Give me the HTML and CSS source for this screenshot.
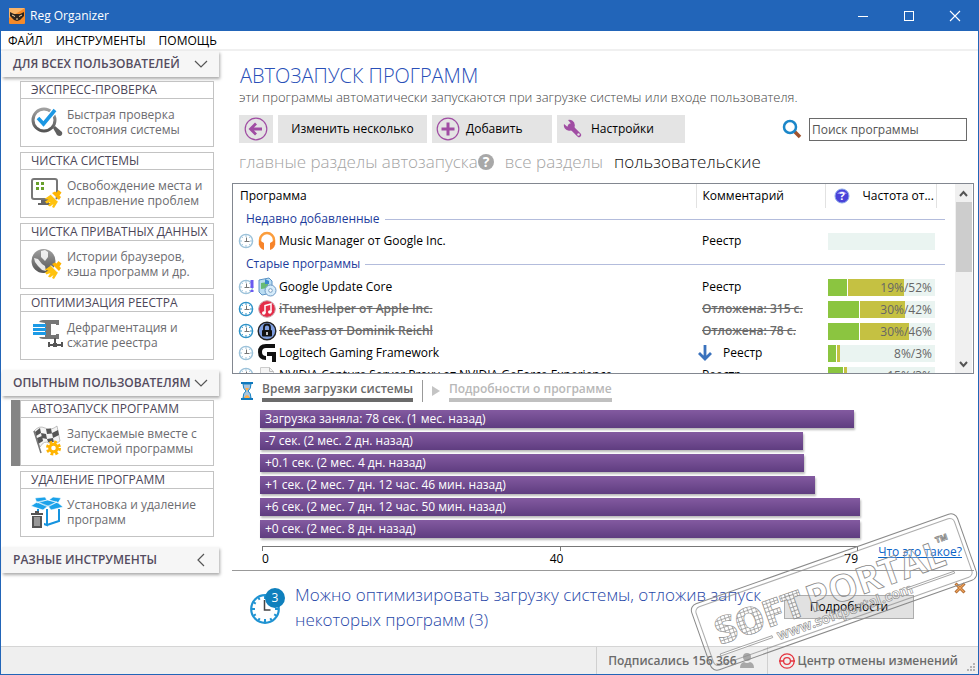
FILE: index.html
```html
<!DOCTYPE html>
<html lang="ru">
<head>
<meta charset="utf-8">
<title>Reg Organizer</title>
<link rel="stylesheet" href="styles.css">
</head>
<body>
<svg class="defs" aria-hidden="true">
  <defs>
    <symbol id="clock" viewBox="0 0 16 16"><circle cx="8" cy="8" r="6.600" fill="#fff" stroke="currentColor" stroke-width="1.400"/><path d="M8 2v2M8 12v2M2 8h2M12 8h2M3.800 3.800l1 1M12.200 3.800l-1 1M3.800 12.200l1-1M12.200 12.200l-1-1" stroke="currentColor"/><path d="M8.500 4.500v4M6.500 8.500h5" fill="none" stroke="#777"/></symbol>
    <symbol id="broom" viewBox="0 0 20 20"><path d="M15.500 1l3 2.500-2 3 1.500 1.500-2 3-7-7 3-1.500 1.500 1z" fill="#ffb400"/><path d="M8 5.500l7 7-4 6.500-2-1 1.500-3-3.500 2.500-2-1 2.500-3.500-4 1.500-1.500-2 3.500-2-4-.5z" fill="#ffc20e"/><path d="M8 5.500l7 7" stroke="#fff" stroke-width="1"/></symbol>
    <linearGradient id="gray" x1="0" y1="0" x2="0" y2="1"><stop offset="0" stop-color="#a0a0a0"/><stop offset="1" stop-color="#555"/></linearGradient>
    <pattern id="cells" width="4" height="4" patternUnits="userSpaceOnUse"><rect width="4" height="4" fill="#fff"/><path d="M0 0h4M0 0v4" stroke="#666" stroke-width="1.400"/></pattern>
  </defs>
</svg>

<div class="window">
  <header class="titlebar">
    <svg class="app-icon" viewBox="0 0 16 16" aria-hidden="true"><rect width="16" height="16" rx="1" fill="#f58a2a"/><path d="M0 0h16L0 10z" fill="#f9b469"/><path d="M1 4l4 2h6l4-2v4l-4 4-3 1-3-1-4-4z" fill="#2d2420"/><path d="M3 7l3 1.500M13 7l-3 1.500M7 11h2" stroke="#ffd9a0"/></svg>
    <span class="title">Reg Organizer</span>
    <div class="window-buttons">
      <button type="button" aria-label="Свернуть"><svg width="12" height="12"><path d="M1 6.500h10" stroke="#fff"/></svg></button>
      <button type="button" aria-label="Развернуть"><svg width="12" height="12"><rect x="1.500" y="1.500" width="9" height="9" fill="none" stroke="#fff"/></svg></button>
      <button type="button" aria-label="Закрыть"><svg width="12" height="12"><path d="M1 1l10 10M11 1L1 11" stroke="#fff" stroke-width="1.100"/></svg></button>
    </div>
  </header>
  <nav class="menu"><a href="#">ФАЙЛ</a><a href="#">ИНСТРУМЕНТЫ</a><a href="#">ПОМОЩЬ</a></nav>

  <div class="body">
    <aside class="sidebar">
      <button type="button" class="section">ДЛЯ ВСЕХ ПОЛЬЗОВАТЕЛЕЙ<svg width="14" height="14"><path d="M1 4l6 6 6-6" fill="none" stroke="#555" stroke-width="1.200"/></svg></button>
      <div class="cards">
        <a href="#" class="card"><span class="card-title">ЭКСПРЕСС-ПРОВЕРКА</span><span class="card-body">
          <svg viewBox="0 0 32 32"><path d="M22 22l2-2 7 6q1 3-2 4-2 0-3-1z" fill="#606060"/><circle cx="13" cy="14" r="11" fill="#fff" stroke="url(#gray)" stroke-width="3"/><path d="M7 12l5.500 6L24 4" fill="none" stroke="#fff" stroke-width="6"/><path d="M7 12l5.500 6L24 4" fill="none" stroke="#1c97e3" stroke-width="3.600"/></svg>
          <span>Быстрая проверка<br>состояния системы</span></span></a>
        <a href="#" class="card"><span class="card-title">ЧИСТКА СИСТЕМЫ</span><span class="card-body">
          <svg viewBox="0 0 32 32"><rect x="1" y="2" width="25" height="20" rx="2" fill="#fff" stroke="#777" stroke-width="2"/><path d="M10 23h8v3h-8zM7 26h13v2H7z" fill="#666"/><path d="M5 5h3v3H5zM10 5h3v3h-3zM5 10h3v3H5zM10 10h3v3h-3z" fill="#68a02c"/><use href="#broom" x="12" y="12" width="20" height="20"/></svg>
          <span>Освобождение места и<br>исправление проблем</span></span></a>
        <a href="#" class="card"><span class="card-title">ЧИСТКА ПРИВАТНЫХ ДАННЫХ</span><span class="card-body">
          <svg viewBox="0 0 32 32"><circle cx="12.500" cy="13" r="12" fill="url(#gray)"/><path d="M10 3l4-1 3 2v5l-3 4-4-4zM3 10l4 1 4 5 3 2 1 5-4-1-4-4-3-4z" fill="#fff" opacity=".85"/><use href="#broom" x="12" y="12" width="20" height="20"/></svg>
          <span>Истории браузеров,<br>кэша программ и др.</span></span></a>
        <a href="#" class="card"><span class="card-title">ОПТИМИЗАЦИЯ РЕЕСТРА</span><span class="card-body">
          <svg viewBox="0 0 32 32"><path d="M8 3q1-2 4-2h16v5h-3V5h-5v11h5v-1h3v5H12q-3 0-4-2h6V4z" fill="#777"/><path d="M2 5h13v3H2zM2 9h13v3H2zM2 13h13v3H2z" fill="#1c9ae6"/><path d="M23 19h2v7h-2zM17 25h15v2H17zM17 23h2v5h-2zM30 23h2v5h-2zM22 24h4v4h-4z" fill="#555"/></svg>
          <span>Дефрагментация и<br>сжатие реестра</span></span></a>
      </div>
      <button type="button" class="section">ОПЫТНЫМ ПОЛЬЗОВАТЕЛЯМ<svg width="14" height="14"><path d="M1 4l6 6 6-6" fill="none" stroke="#555" stroke-width="1.200"/></svg></button>
      <div class="cards">
        <a href="#" class="card current"><span class="card-title">АВТОЗАПУСК ПРОГРАММ</span><span class="card-body">
          <svg viewBox="0 0 32 32"><path d="M3 6q5-6 11-3t12-2l3 15q-6 5-11 2t-9 4z" fill="#f4f4f4" stroke="#999" stroke-width=".6"/><path d="M4 7l5-4 1 5-5 3zM15 4l5-.5 1 5-5 .5zM10 8l5 1 1 5-5-1zM21 8l6-3 1 5-6 3zM6 13l5-2 1 5-5 3zM16 14l6-1 1 5-6-1z" fill="#555"/><path d="M3 6l7 22" stroke="#777" stroke-width="1.500"/><circle cx="22.500" cy="23" r="6" fill="#fff" stroke="#ffb400" stroke-width="3" stroke-dasharray="2.700 2"/><circle cx="22.500" cy="23" r="3.800" fill="#fff" stroke="#ffb400" stroke-width="3"/></svg>
          <span>Запускаемые вместе с<br>системой программы</span></span></a>
        <a href="#" class="card"><span class="card-title">УДАЛЕНИЕ ПРОГРАММ</span><span class="card-body">
          <svg viewBox="0 0 32 32"><path d="M6 6l10-2 10 2-9 5zM4 2l10-1 2 3-10 3zM18 4l4-3 8 1-3 5zM0 10l6-4 11 4-5 4zM17 10l9-4 6 5-12 3z" fill="#1ba2ea" stroke="#fff" stroke-width=".6"/><path d="M7 13v13l9 3V13M16 29l12-4V13" fill="none" stroke="#1593df" stroke-width="2"/><path d="M0 15h13v17H0z" fill="#fff"/><path d="M0 17h12v2H0zM4 15h4v2H4zM1 20h10v12H1z" fill="#555"/><path d="M4 21v9M6 21v9M8 21v9" stroke="#fff" stroke-width=".8"/></svg>
          <span>Установка и удаление<br>программ</span></span></a>
      </div>
      <button type="button" class="section">РАЗНЫЕ ИНСТРУМЕНТЫ<svg width="14" height="14"><path d="M10 1L4 7l6 6" fill="none" stroke="#555" stroke-width="1.200"/></svg></button>
    </aside>

    <main class="main">
      <h1>АВТОЗАПУСК ПРОГРАММ</h1>
      <p class="subtitle">эти программы автоматически запускаются при загрузке системы или входе пользователя.</p>

      <div class="toolbar">
        <button type="button" class="tool back" aria-label="Назад"><svg width="24" height="24"><circle cx="12" cy="12" r="10.800" fill="none" stroke="#a04da3" stroke-width="1.200"/><path d="M18 12H7M12 6.500L6.500 12l5.500 5.500" fill="none" stroke="#a04da3" stroke-width="2.800"/></svg></button>
        <button type="button" class="tool several">Изменить несколько</button>
        <button type="button" class="tool add"><svg width="24" height="24"><circle cx="12" cy="12" r="10.800" fill="none" stroke="#a04da3" stroke-width="1.200"/><path d="M12 5.500v13M5.500 12h13" stroke="#a04da3" stroke-width="3"/></svg>Добавить</button>
        <button type="button" class="tool settings"><svg width="20" height="20"><path d="M7 7l9 9" stroke="#a04da3" stroke-width="4.500" stroke-linecap="round"/><path d="M5 1a5.500 5.500 0 1 1-4 4l3 2.500 3-.5.500-3z" fill="#a04da3"/><circle cx="15.500" cy="15.500" r="1.200" fill="#e4e4e4"/></svg>Настройки</button>
        <div class="search">
          <label for="q" aria-label="Поиск"><svg width="20" height="20"><path d="M12 12l6 6" stroke="#a0522d" stroke-width="3.500"/><circle cx="8" cy="8" r="6" fill="#fff" stroke="#1b87c9" stroke-width="2.500"/></svg></label>
          <input id="q" type="text" placeholder="Поиск программы">
        </div>
      </div>

      <nav class="filters">
        <a href="#">главные разделы автозапуска<svg width="16" height="16"><circle cx="8" cy="8" r="8" fill="#a8a8a8"/><text x="8" y="13" text-anchor="middle" class="help-mark">?</text></svg></a>
        <a href="#">все разделы</a>
        <a href="#" class="on">пользовательские</a>
      </nav>

      <section class="list">
        <div class="list-view">
        <table>
          <colgroup><col><col class="c-comment"><col class="c-freq"><col class="c-end"></colgroup>
          <thead><tr><th>Программа</th><th>Комментарий</th><th><span class="freq-head"><svg width="16" height="16"><circle cx="8" cy="8" r="7" fill="#4a42d8" stroke="#8aa8ea"/><path d="M3 6a5.500 4.500 0 0 1 10 0z" fill="#8f8cf5"/><text x="8" y="12" text-anchor="middle" class="help-mark small">?</text></svg>Частота от...</span></th><th></th></tr></thead>
          <tbody>
            <tr class="group"><td colspan="4"><span>Недавно добавленные</span></td></tr>
            <tr><td><span class="prog"><svg class="clk dim"><use href="#clock"/></svg>
              <svg width="20" height="20" viewBox="0 0 20 20"><path d="M3 14V9a7 7 0 0 1 14 0v5" fill="none" stroke="#fb9d3c" stroke-width="2.500"/><path d="M2 9l5 3v7q-5-2-5-6zM18 9l-5 3v7q5-2 5-6z" fill="#f7842a"/></svg>Music Manager от Google Inc.</span></td><td>Реестр</td><td><span class="freq"></span></td><td></td></tr>
            <tr class="group"><td colspan="4"><span>Старые программы</span></td></tr>
            <tr><td><span class="prog"><svg class="clk dim"><use href="#clock"/><path d="M12.500 1h3v8h-3zM12.500 11h3v2h-3z" fill="#6a5af0"/></svg>
              <svg width="20" height="20" viewBox="0 0 20 20"><path d="M2 3l10-2 3 3v12l-10 2-3-3z" fill="#b9dcf2" stroke="#5c93c4"/><path d="M4 6l7-1v6l-7 1z" fill="#69bb74"/><path d="M8 2l4 2v3H8z" fill="#3d88d0"/><circle cx="13.500" cy="13.500" r="5.500" fill="#d6ecfa" stroke="#6e99c5"/><circle cx="13.500" cy="13.500" r="1.800" fill="#fff" stroke="#7a9dc0"/></svg>Google Update Core</span></td><td>Реестр</td><td><span class="freq"><i class="g" style="width:19%"></i><i class="o" style="width:52%"></i><b>19%/52%</b></span></td><td></td></tr>
            <tr class="off"><td><span class="prog"><svg class="clk"><use href="#clock"/></svg>
              <svg width="20" height="20" viewBox="0 0 20 20"><circle cx="10" cy="10" r="8.300" fill="#e52c48" stroke="#c8a0a8"/><path d="M8 14V6.500l6-1.500v8" fill="none" stroke="#fff" stroke-width="1.500"/><circle cx="6.800" cy="14" r="1.800" fill="#fff"/><circle cx="12.800" cy="13" r="1.800" fill="#fff"/></svg><s>iTunesHelper от Apple Inc.</s></span></td><td><s>Отложена: 315 с.</s></td><td><span class="freq"><i class="g" style="width:30%"></i><i class="o" style="width:42%"></i><b>30%/42%</b></span></td><td></td></tr>
            <tr class="off"><td><span class="prog"><svg class="clk"><use href="#clock"/></svg>
              <svg width="20" height="20" viewBox="0 0 20 20"><circle cx="10" cy="10" r="8.800" fill="#7f9fe0" stroke="#222" stroke-width="1.400"/><rect x="5" y="9" width="10" height="6.500" rx="1" fill="#111"/><path d="M7 9V6.500a3 3 0 0 1 6 0V9" fill="none" stroke="#111" stroke-width="1.800"/><path d="M10 11v3" stroke="#fff" stroke-width="1.500"/></svg><s>KeePass от Dominik Reichl</s></span></td><td><s>Отложена: 78 с.</s></td><td><span class="freq"><i class="g" style="width:30%"></i><i class="o" style="width:46%"></i><b>30%/46%</b></span></td><td></td></tr>
            <tr><td><span class="prog"><svg class="clk dim"><use href="#clock"/></svg>
              <svg width="20" height="20" viewBox="0 0 20 20"><path d="M18 1H9Q1 1 1 9t8 8v-4q-4 0-4-4t4-4h9zM10 9h9v10h-4v-6h-5z" fill="#111"/></svg>Logitech Gaming Framework</span></td><td><span class="moved"><svg width="14" height="16"><path d="M7 0v13M1 8l6 6 6-6" fill="none" stroke="#3a72bd" stroke-width="2.800"/></svg>Реестр</span></td><td><span class="freq"><i class="g" style="width:8%"></i><i class="o" style="width:3%"></i><b>8%/3%</b></span></td><td></td></tr>
            <tr><td><span class="prog"><svg class="clk dim"><use href="#clock"/></svg>
              <svg width="20" height="20" viewBox="0 0 20 20"><path d="M3.500 2.500h9l4 4v12h-13z" fill="#f5f5f5" stroke="#ccc"/><path d="M12.500 2.500v4h4" fill="none" stroke="#bbb"/></svg>NVIDIA Capture Server Proxy от NVIDIA GeForce Experience</span></td><td>Реестр</td><td><span class="freq"><i class="g" style="width:15%"></i><i class="o" style="width:3%"></i><b>15%/3%</b></span></td><td></td></tr>
          </tbody>
        </table>
        </div>
        <div class="scrollbar">
          <button type="button" aria-label="Вверх"><svg width="9" height="7"><path d="M1 6l3.500-4L8 6" fill="none" stroke="#555" stroke-width="2"/></svg></button>
          <div class="track"><div class="thumb"></div></div>
          <button type="button" aria-label="Вниз"><svg width="9" height="7"><path d="M1 1l3.500 4L8 1" fill="none" stroke="#555" stroke-width="2"/></svg></button>
        </div>
      </section>

      <nav class="tabs">
        <svg width="12" height="18"><path d="M2 2h8q0 5-3 7 3 2 3 7H2q0-5 3-7-3-2-3-7z" fill="#a9c4dc" stroke="#1683c6"/><path d="M3 16q3-6 6 0zM4 6h4L6 9z" fill="#ffae4a"/><path d="M0 1h12M0 17h12" stroke="#0f78bd" stroke-width="2"/></svg>
        <a href="#" class="on">Время загрузки системы</a>
        <span class="divider"></span>
        <svg width="8" height="10"><path d="M0 0l8 5-8 5z" fill="#c4c4c4"/></svg>
        <a href="#">Подробности о программе</a>
      </nav>

      <section class="chart">
        <div class="plot">
          <div class="bar" style="width:99%">Загрузка заняла: 78 сек. (1 мес. назад)</div>
          <div class="bar" style="width:90.500%">-7 сек. (2 мес. 2 дн. назад)</div>
          <div class="bar" style="width:90.700%">+0.1 сек. (2 мес. 4 дн. назад)</div>
          <div class="bar" style="width:92.500%">+1 сек. (2 мес. 7 дн. 12 час. 46 мин. назад)</div>
          <div class="bar" style="width:100%">+6 сек. (2 мес. 7 дн. 12 час. 50 мин. назад)</div>
          <div class="bar" style="width:100%">+0 сек. (2 мес. 8 дн. назад)</div>
          <div class="axis"><span>0</span><span>40</span><span>79</span></div>
        </div>
        <a href="#" class="what">Что это такое?</a>
      </section>

      <section class="advice">
        <svg width="36" height="38"><circle cx="16" cy="21" r="13.800" fill="#fff" stroke="#2093d2" stroke-width="2.200"/><path d="M16 8v3M16 31v3M3 21h3M26 21h3M9.500 9.800l1.200 2M22.500 32.200l-1.200-2M4.800 14.500l2 1.200M4.800 27.500l2-1.200M9.500 32.200l1.200-2M27.200 27.500l-2-1.200" stroke="#2093d2" stroke-width="2"/><path d="M15.500 12v10h6" fill="none" stroke="#444" stroke-width="1.500"/><circle cx="26" cy="10" r="10" fill="#0f80bd"/><text x="26" y="14" text-anchor="middle" class="count">3</text></svg>
        <p>Можно оптимизировать загрузку системы, отложив запуск некоторых программ (3)</p>
        <button type="button" class="details">Подробности</button>
        <button type="button" class="dismiss" aria-label="Закрыть"><svg width="12" height="12"><path d="M1.500 1.500l9 9M10.500 1.500l-9 9" stroke="#a8642c" stroke-width="3"/><path d="M2 2l8 8M10 2l-8 8" stroke="#f0a35a" stroke-width="1.200"/></svg></button>
      </section>
    </main>
  </div>

  <footer class="status">
    <a href="#">Подписались 156 366<svg width="14" height="15"><circle cx="7" cy="4" r="4" fill="#a8a8a8"/><path d="M0 15q0-5 4-6 3 2 6 0 4 1 4 6z" fill="#a8a8a8"/></svg></a>
    <a href="#" class="undo"><svg width="16" height="16"><g fill="none" stroke="#e5343f" stroke-width="1.300"><circle cx="8" cy="8" r="7.200"/><circle cx="8" cy="8" r="3.400"/><path d="M0 8h4.600M11.400 8H16"/></g></svg>Центр отмены изменений</a>
    <svg class="grip" width="9" height="9"><path d="M6 0h2v2H6zM3 3h2v2H3zM6 3h2v2H6zM0 6h2v2H0zM3 6h2v2H3zM6 6h2v2H6z" fill="#b4b4b4"/></svg>
  </footer>

  <svg class="stamp" width="290" height="170" aria-hidden="true">
    <g transform="translate(145 87) rotate(-19.500)">
      <g fill="none" stroke="#8a8a8a">
        <rect x="-141" y="-35" width="282" height="70" rx="7"/>
        <rect x="-137" y="-31" width="274" height="62" rx="5" stroke-opacity=".7"/>
      </g>
      <g class="stamp-text">
        <text x="-125" y="12" class="soft">SOFT</text>
        <text x="-28" y="12" class="portal">PORTAL</text>
        <text x="113" y="-12" class="tm">TM</text>
        <text x="-68" y="27" class="url">www.softportal.com</text>
      </g>
      <path d="M-128 20.500h55v2h-55zM70 20.500h50v2h-50z" fill="#fff" stroke="#8a8a8a" stroke-width=".7"/>
    </g>
  </svg>
</div>
</body>
</html>
```

FILE: styles.css
```css
* { box-sizing: border-box; }

body {
  margin: 0;
  font: 12px/16px "Open Sans", "Noto Sans", sans-serif;
  color: #000;
}

a { color: inherit; text-decoration: none; }
button { font: inherit; color: inherit; border: 0; padding: 0; background: none; }
svg { flex: none; display: block; }
.defs { position: absolute; width: 0; height: 0; }

.window {
  position: relative;
  display: flex;
  flex-direction: column;
  height: 100vh;
  min-height: 640px;
  overflow: hidden;
  border: 1px solid #2265b8;
  border-top: 0;
  background: #fff;
}

.titlebar {
  display: flex;
  align-items: center;
  height: 31px;
  padding-left: 8px;
  background: #2265b9;
  color: #fff;
}
.app-icon { width: 16px; height: 16px; }
.title { margin-left: 5px; }
.window-buttons { display: flex; margin-left: auto; }
.window-buttons button {
  display: grid;
  place-items: center;
  width: 46px;
  height: 31px;
}

.menu {
  display: flex;
  gap: 13px;
  height: 20px;
  padding-left: 7px;
  line-height: 19px;
  border-bottom: 2px solid #f0f0f0;
}

.body { display: flex; flex: 1; min-height: 0; }

.sidebar { width: 220px; flex: none; }
.section {
  display: flex;
  align-items: center;
  justify-content: space-between;
  width: 217px;
  height: 26px;
  margin-left: 1px;
  padding: 0 11px;
  line-height: 24px;
  background: #f6f6f6;
  box-shadow: 1px 2px 3px #aaa;
  color: #544c60;
  font-weight: 600;
}
.cards {
  display: flex;
  flex-direction: column;
  gap: 5px;
  padding: 4px 7px 10px 19px;
}
.card {
  height: 66px;
  border: 1px solid #c3c3c3;
  color: #6c6c70;
  line-height: 15px;
}
.card.current { box-shadow: -9px 0 #858585; }
.card-title {
  display: block;
  height: 17px;
  padding-left: 10px;
  line-height: 16px;
  border-bottom: 1px solid #c3c3c3;
  color: #4c4658;
  white-space: nowrap;
}
.card-body {
  display: flex;
  align-items: center;
  gap: 4px;
  height: 45px;
  padding-left: 10px;
  white-space: nowrap;
}
.card-body svg { width: 32px; height: 32px; }

.main {
  display: flex;
  flex-direction: column;
  flex: 1;
  min-width: 0;
  padding: 12px 4px 0 11px;
}

h1 {
  margin: 0 0 0 8px;
  font-size: 20px;
  line-height: 26px;
  font-weight: 300;
  color: #2a50b8;
}
.subtitle {
  margin: 0 0 0 7px;
  font-size: 13px;
  line-height: 16px;
  font-weight: 300;
  color: #444;
}

.toolbar {
  display: flex;
  gap: 5px;
  margin: 10px 7px 0;
}
.tool {
  display: flex;
  align-items: center;
  height: 28px;
  background: #e4e4e4;
}
.back { justify-content: center; width: 34px; }
.several { justify-content: center; width: 149px; }
.add { gap: 6px; width: 120px; padding-left: 4px; }
.settings { gap: 8px; width: 128px; padding-left: 6px; }
.search {
  display: flex;
  align-items: center;
  gap: 7px;
  margin-left: auto;
}
.search input {
  width: 158px;
  height: 23px;
  padding: 0 2px;
  border: 1px solid #6a6a6a;
  font: inherit;
}
.search input::placeholder { color: #555; opacity: 1; }

.filters {
  display: flex;
  gap: 11px;
  margin: 7px 0 9px 7px;
  font-size: 17px;
  line-height: 24px;
  font-weight: 300;
  color: #a4a4a4;
}
.filters a { display: flex; align-items: center; }
.filters .on { color: #111; }
.help-mark { font-size: 14px; font-weight: 700; fill: #fff; }
.help-mark.small { font-size: 11px; }

.list {
  display: flex;
  flex: 1;
  min-height: 0;
  padding: 0 1px;
  border: 1px solid #828790;
}
.list-view { flex: 1; min-width: 0; overflow: hidden; }
table {
  width: 100%;
  table-layout: fixed;
  border-collapse: collapse;
}
.c-comment { width: 129px; }
.c-freq { width: 111px; }
.c-end { width: 19px; }
td, th {
  height: 22px;
  padding: 0 6px;
  font-weight: 400;
  text-align: left;
  white-space: nowrap;
  overflow: hidden;
}
th { height: 24px; border-right: 1px solid #e2e2e2; }
th:last-child { border: 0; }
td:nth-child(3), th:nth-child(3), td:nth-child(4), th:nth-child(4) { padding: 0; }
.freq-head { display: flex; align-items: center; gap: 13px; padding-left: 8px; }
.group td { padding: 0 10px 0 12px; color: #1d3c9c; }
.group td span { display: flex; align-items: center; gap: 5px; }
.group td span::after { content: ""; flex: 1; height: 1px; background: #b3bcdc; }
.group ~ .group td { height: 24px; }
.prog { display: flex; align-items: center; gap: 2px; }
.clk { width: 16px; height: 16px; margin-right: 1px; color: #2d93c9; }
.clk.dim { color: #9cc2da; }
td .prog { margin-left: -2px; }
.moved { display: flex; align-items: center; gap: 11px; margin-left: -4px; }
.off { color: #6b6b6b; }
.off td { font-weight: 600; }
.freq {
  position: relative;
  display: flex;
  width: 107px;
  height: 17px;
  margin-left: 3px;
  background: #eaf4f1;
}
.freq i.g { background: #8bc540; border-right: 1px solid #fff; }
.freq i.o { background: #c5c142; }
.freq b {
  position: absolute;
  right: 3px;
  line-height: 17px;
  font-weight: 400;
  color: #666;
}

.scrollbar {
  display: flex;
  flex-direction: column;
  width: 17px;
  background: #f0f0f0;
}
.scrollbar button { display: grid; place-items: center; height: 18px; }
.track { flex: 1; }
.thumb { height: 70px; margin-left: 1px; background: #cdcdcd; }

.tabs {
  display: flex;
  align-items: center;
  gap: 9px;
  padding: 6px 0 0 9px;
  font-weight: 600;
  color: #b8b8b8;
}
.tabs a { line-height: 18px; border-bottom: 4px solid #c0c0c0; }
.tabs .on { color: #6b6b6b; border-color: #6b6b6b; }
.divider { width: 1px; height: 22px; background: #999; }

.chart {
  display: flex;
  align-items: flex-end;
  padding: 8px 12px 3px 28px;
  border-bottom: 1px solid #999;
}
.plot {
  display: flex;
  flex-direction: column;
  gap: 4px;
  flex: 1;
}
.bar {
  height: 18px;
  padding-left: 5px;
  line-height: 17px;
  color: #fff;
  background: linear-gradient(#835aa0, #5f3d80);
  box-shadow: 1px 2px 2px #bbb;
  white-space: nowrap;
}
.axis {
  display: flex;
  justify-content: space-between;
  margin: 4px 2px 0;
  padding-top: 4px;
  border-top: 1px solid #777;
  background:
    linear-gradient(#777, #777) 0 0 / 1px 4px no-repeat,
    linear-gradient(#777, #777) 50% 0 / 1px 4px no-repeat,
    linear-gradient(#777, #777) 100% 0 / 1px 4px no-repeat;
}
.what {
  width: 102px;
  padding-bottom: 7px;
  color: #0a64c8;
  text-align: right;
  text-decoration: underline;
}

.advice {
  display: flex;
  align-items: center;
  padding: 11px 8px 14px 17px;
}
.advice p {
  flex: 1;
  margin: 0 6px 0 10px;
  font-size: 17px;
  line-height: 25px;
  font-weight: 300;
  color: #2747a8;
}
.count { font-size: 12px; fill: #fff; }
.details {
  width: 130px;
  height: 24px;
  border: 1px solid #adadad;
  background: #e1e1e1;
}
.dismiss { align-self: flex-start; margin-left: 40px; }

.status {
  display: flex;
  justify-content: flex-end;
  height: 28px;
  padding-right: 2px;
  border-top: 1px solid #d5d5d5;
  background: #efefef;
  color: #6b6b6b;
  font-weight: 600;
}
.status a {
  display: flex;
  align-items: center;
  gap: 3px;
  padding: 0 13px 0 11px;
  border-left: 1px solid #d0d0d0;
}
.status .undo { padding-right: 9px; }
.grip { align-self: flex-end; margin-bottom: 2px; }

.stamp {
  position: absolute;
  right: -1px;
  bottom: -1px;
  pointer-events: none;
}
.stamp-text {
  fill: #fff;
  fill-opacity: 0.3;
  stroke: #8a8a8a;
  stroke-width: 0.8px;
  font-weight: 700;
}
.soft { font-size: 37px; font-weight: 800; fill: url(#cells); fill-opacity: 0.7; stroke-width: 0.6px; }
.portal { font-size: 37px; }
.tm { font-size: 8px; }
.url { font-size: 14px; stroke-width: 0.6px; }
```
